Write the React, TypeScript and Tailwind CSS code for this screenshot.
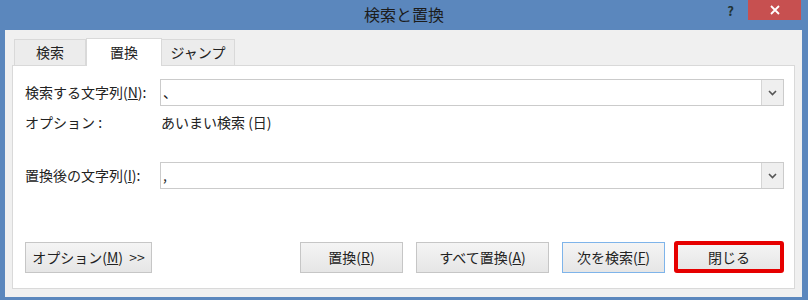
import React from "react";

const font = { fontFamily: '"Noto Sans CJK JP", "Noto Sans", sans-serif' };

function Combo({ value }: { value: string }) {
  return (
    <div className="flex-1 h-[27px] flex items-center bg-white border border-[#cbcbcb] pl-[2px]">
      <span className="flex-1 text-[14px] text-[#222]">{value}</span>
      <div className="w-[22px] h-full flex items-center justify-center bg-[#efefef] border-l border-[#d5d5d5]">
        <svg width="9" height="6" viewBox="0 0 9 6">
          <path d="M1 1 L4.5 4.5 L8 1" fill="none" stroke="#555" strokeWidth="1.6" />
        </svg>
      </div>
    </div>
  );
}

function Btn({
  children,
  width,
  primary = false,
}: {
  children: React.ReactNode;
  width: string;
  primary?: boolean;
}) {
  return (
    <button
      className={`${width} h-[31px] flex items-center justify-center text-[14px] text-[#222] border bg-gradient-to-b from-[#f4f4f4] to-[#e6e6e6] ${
        primary ? "border-[#7eb4ea]" : "border-[#c6c6c6]"
      }`}
    >
      {children}
    </button>
  );
}

export default function App() {
  return (
    <div
      className="w-[808px] h-[300px] bg-[#5b87bd] flex flex-col overflow-hidden"
      style={font}
    >
      {/* title bar */}
      <div className="relative h-[30px] flex items-center justify-center">
        <span className="text-[16px] text-[#1c1c1c] pb-[2px]">検索と置換</span>
        <div className="absolute right-[7px] top-0 flex items-start">
          <span className="text-[13px] font-bold text-[#233] mt-[1px] mr-[14px]">?</span>
          <div className="w-[53px] h-[20px] bg-[#c75050] flex items-center justify-center">
            <svg width="10" height="10" viewBox="0 0 10 10">
              <path d="M1 1 L9 9 M9 1 L1 9" stroke="#fff" strokeWidth="1.8" />
            </svg>
          </div>
        </div>
      </div>

      {/* body */}
      <div className="ml-[5px] mr-[6px] h-[267px] bg-[#f0f0f0] pt-[8px] px-[7px]">
        {/* tabs */}
        <div className="flex items-end h-[27px] ml-[2px] text-[14px] text-[#222]">
          <div className="w-[72px] h-[26px] flex items-center justify-center bg-[#ececec] border border-b-0 border-[#d9d9d9]">
            検索
          </div>
          <div className="w-[76px] h-[28px] -mb-px z-10 flex items-center justify-center bg-white border border-b-0 border-[#d9d9d9]">
            置換
          </div>
          <div className="w-[73px] h-[26px] flex items-center justify-center bg-[#ececec] border border-b-0 border-l-0 border-[#d9d9d9]">
            ジャンプ
          </div>
        </div>

        {/* panel */}
        <div className="h-[224px] bg-white border border-[#d9d9d9] pl-[12px] pr-[10px] pt-[13px] text-[14px] text-[#222]">
          <div className="flex items-center">
            <span className="w-[135px]">
              検索する文字列(<u>N</u>):
            </span>
            <Combo value="、" />
          </div>
          <div className="flex items-center h-[18px] mt-[7px]">
            <span className="w-[136px]">オプション :</span>
            <span>あいまい検索 (日)</span>
          </div>
          <div className="flex items-center mt-[31px]">
            <span className="w-[135px]">
              置換後の文字列(<u>I</u>):
            </span>
            <Combo value="," />
          </div>

          <div className="flex items-center mt-[52px]">
            <Btn width="w-[127px]">
              オプション(<u>M</u>)&nbsp;&nbsp;&gt;&gt;
            </Btn>
            <div className="flex-1" />
            <Btn width="w-[103px]">
              置換(<u>R</u>)
            </Btn>
            <div className="w-[13px]" />
            <Btn width="w-[133px]">
              すべて置換(<u>A</u>)
            </Btn>
            <div className="w-[13px]" />
            <Btn width="w-[103px]" primary>
              次を検索(<u>F</u>)
            </Btn>
            <div className="w-[9px]" />
            <div className="w-[110px] h-[32px] border-[4px] border-[#e60000] rounded-[3px] flex">
              <button className="flex-1 flex items-center justify-center text-[14px] text-[#222] bg-gradient-to-b from-[#f4f4f4] to-[#e6e6e6]">
                閉じる
              </button>
            </div>
          </div>
        </div>
      </div>
    </div>
  );
}
